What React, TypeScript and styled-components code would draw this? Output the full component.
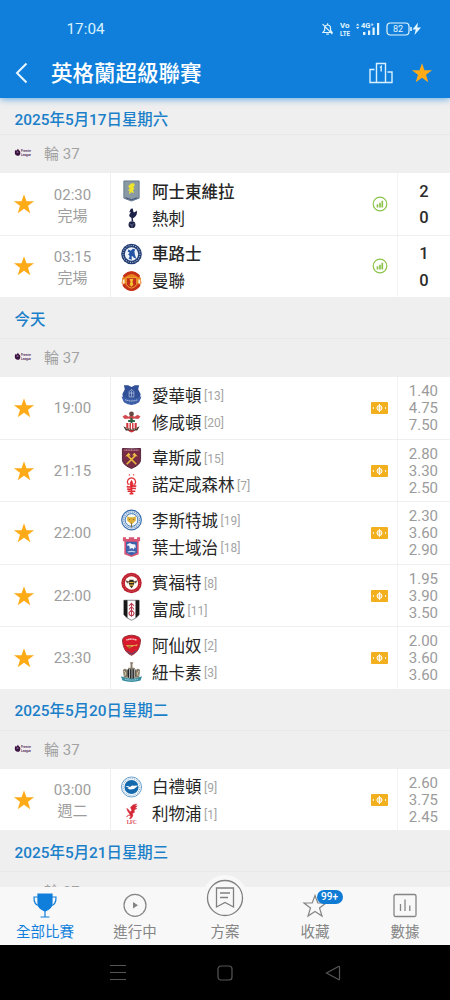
import React from "react";
import styled, { createGlobalStyle } from "styled-components";

const GlobalStyle = createGlobalStyle`
  * { box-sizing: border-box; }
  body { margin: 0; background: #efefef; }
`;

const Screen = styled.div`
  width: 450px;
  height: 1000px;
  display: flex;
  flex-direction: column;
  overflow: hidden;
  background: #efefef;
  font-family: Roboto, "Noto Sans CJK TC", sans-serif;
  svg { display: block; flex: none; overflow: visible; }
`;

const Header = styled.header`
  height: 98px;
  flex: none;
  background: #107fdb;
  color: #fff;
  box-shadow: 0 1px 7px rgba(16, 127, 219, 0.65);
  z-index: 1;
`;

const StatusBar = styled.div`
  display: flex;
  justify-content: space-between;
  align-items: center;
  height: 26px;
  margin-top: 16px;
  padding: 0 27px 0 66.5px;
  font-size: 15.3px;
  color: #d8f1ff;
`;

const TitleBar = styled.div`
  display: flex;
  align-items: center;
  height: 40px;
  margin-top: 11px;
  padding: 0 17px 0 15px;
`;

const Title = styled.h1`
  flex: 1;
  margin: 2px 0 0 23px;
  font-size: 21.5px;
  line-height: 30px;
  font-weight: 500;
`;

const Actions = styled.div`
  display: flex;
  align-items: center;
  gap: 18px;
`;

const List = styled.main`
  flex: 1;
  min-height: 0;
  overflow: hidden;
`;

const DateHeading = styled.h2<{ $pinned?: boolean }>`
  display: flex;
  align-items: center;
  height: ${(p) => (p.$pinned ? 37 : 41)}px;
  margin: 0;
  padding: 0 0 ${(p) => (p.$pinned ? "0" : "1px")} 14.5px;
  padding-top: ${(p) => (p.$pinned ? 4.5 : 0)}px;
  border-bottom: 1px solid #e8e8e8;
  font-size: 15.4px;
  font-weight: 500;
  color: #1b7fc9;
`;

const RoundRow = styled.div`
  display: flex;
  align-items: center;
  gap: 12px;
  height: 38.3px;
  padding: 0 0 3px 14px;
  font-size: 15px;
  color: #a2a2a2;
`;

const MatchRow = styled.div`
  display: grid;
  grid-template-columns: 48px 62px 1fr 36px 53px;
  height: 62.45px;
  background: #fff;
  border-bottom: 1px solid #efefef;
`;

const Centered = styled.div<{ $shift?: boolean }>`
  display: flex;
  align-items: center;
  justify-content: center;
  padding-left: ${(p) => (p.$shift ? 2 : 0)}px;
`;

const Kickoff = styled.div<{ $double?: boolean }>`
  display: flex;
  flex-direction: column;
  justify-content: center;
  align-items: center;
  padding: ${(p) => (p.$double ? 3 : 1)}px 13px 0 0;
  font-size: 15px;
  line-height: 21px;
  color: #9d9d9d;
`;

const Teams = styled.div`
  display: flex;
  flex-direction: column;
  gap: 1px;
  padding: 5px 0 0 10px;
  border-left: 1px solid #efefef;
`;

const TeamLine = styled.div<{ $winner?: boolean }>`
  display: flex;
  align-items: center;
  height: 26px;
  font-size: 16.5px;
  white-space: nowrap;
  color: #262626;
  font-weight: ${(p) => (p.$winner ? 500 : 400)};
`;

const TeamName = styled.span`
  margin-left: 10px;
  padding-top: 3px;
  line-height: 26px;
`;

const Rank = styled.span`
  margin-left: 2.5px;
  padding-top: 2px;
  font-size: 12px;
  font-weight: 400;
  color: #a4a4a4;
`;

const Score = styled.div`
  display: flex;
  flex-direction: column;
  align-items: center;
  padding-top: 5.3px;
  border-left: 1px solid #f3f3f3;
  font-size: 16.5px;
  font-weight: 500;
  line-height: 26.6px;
  color: #2c2c2c;
`;

const Odds = styled.div`
  display: flex;
  flex-direction: column;
  justify-content: center;
  align-items: flex-end;
  padding: 1px 12px 0 0;
  border-left: 1px solid #f3f3f3;
  font-size: 15px;
  line-height: 17px;
  color: #9b9b9b;
`;

const Nav = styled.nav`
  display: grid;
  grid-template-columns: repeat(5, 1fr);
  flex: none;
  height: 58px;
  background: #f8f8f8;
  z-index: 1;
`;

const NavItem = styled.div<{ $active?: boolean }>`
  position: relative;
  display: flex;
  flex-direction: column;
  align-items: center;
  gap: 4px;
  padding-top: 6px;
  color: ${(p) => (p.$active ? "#107fdb" : "#858585")};
`;

const NavLabel = styled.span`
  font-size: 14.5px;
  line-height: 22px;
  font-weight: 400;
`;

const Raised = styled.div`
  display: flex;
  align-items: center;
  justify-content: center;
  width: 46px;
  height: 46px;
  margin: -18px 0 -3px;
  border-radius: 50%;
  background: #f8f8f8;
`;

const Badge = styled.span`
  position: absolute;
  left: 46.5px;
  top: 3px;
  width: 26px;
  height: 14px;
  border-radius: 7px;
  background: #107bd5;
  color: #fff;
  font-size: 10px;
  font-weight: 500;
  line-height: 14px;
  text-align: center;
`;

const SystemBar = styled.footer`
  display: flex;
  justify-content: center;
  align-items: center;
  gap: 91.5px;
  height: 55px;
  flex: none;
  background: #000;
`;

const STAR = "M12 1.3 14.7 9H23l-6.6 5 2.4 8L12 17.3 5.2 22l2.4-8L1 9h8.3z";

const Star = ({ size = 22 }: { size?: number }) => (
  <svg width={size} height={size} viewBox="0 0 24 24"><path d={STAR} fill="#ffab17" /></svg>
);

const StatusIcons = () => (
  <svg width="103" height="16" viewBox="0 0 103 16" fill="none" stroke="#e3f6ff" strokeWidth="1.2">
    <path d="M3 11.5h9l-1.5-2.4V7c0-4-5.800-4-5.800 0v2.100zM6.300 13.200h2.600M7.600 2.300v1.400M2.600 3.200l9.800 10" />
    <g stroke="none" fill="#e3f6ff" fontFamily="Roboto, sans-serif" fontWeight="700">
      <text x="20" y="7.200" fontSize="7" textLength="9.500" lengthAdjust="spacingAndGlyphs">Vo</text>
      <text x="20" y="14.600" fontSize="7" textLength="10" lengthAdjust="spacingAndGlyphs">LTE</text>
      <text x="41" y="7" fontSize="7.500" textLength="12.500" lengthAdjust="spacingAndGlyphs">4G⁺</text>
      <text x="73" y="11" fontSize="9" fontWeight="400">82</text>
      <path d="M36 4.500 37.700 2.500 39.400 4.500zM36 6 37.700 8 39.400 6zM43 11h2.400v3H43zM48 9.500h2.200V14H48zM52.500 6.500h2.200V14h-2.200zM57 2h2.200v12H57zM98 1.500l-5.500 7h3.200L94.500 14 101 6.500h-3.700z" />
    </g>
    <rect x="67" y="2" width="22" height="12" rx="3.500" />
    <path d="M91 6v4" strokeWidth="1.600" />
  </svg>
);

const LeagueLogo = () => (
  <svg width="18" height="9" viewBox="0 0 18 9">
    <path d="M1 2.200 2.600 2.600 4 .8 4.800 2.200C7 3.200 6.500 6 5.300 7.500 3.200 8.500.8 7.300.8 4.800z" fill="#3b1140" />
    <path d="M2.600 4.300 3.800 3.700 4 5" stroke="#cbb9cd" strokeWidth=".6" fill="none" />
    <text x="7" y="4.200" fontSize="3.400" fontWeight="700" fill="#5a3160" textLength="10" lengthAdjust="spacingAndGlyphs">Premier</text>
    <text x="7" y="7.600" fontSize="3.400" fontWeight="700" fill="#5a3160" textLength="10" lengthAdjust="spacingAndGlyphs">League</text>
  </svg>
);

const StatsIcon = () => (
  <svg width="16" height="16" viewBox="0 0 16 16" fill="none" stroke="#8cc34b">
    <circle cx="8" cy="8" r="6.800" strokeWidth="1.200" />
    <path d="M5.500 8.200v3.300M8 6.800v4.700M10.300 4.700v6.800" strokeWidth="1.700" />
  </svg>
);

const PitchIcon = () => (
  <svg width="17" height="12" viewBox="0 0 17 12">
    <rect width="17" height="12" rx="1" fill="#f2b01f" />
    <circle cx="8.500" cy="6" r="2.500" fill="#f7cc6c" stroke="#fff" strokeWidth="1" />
    <path d="M8.500 2v8M2.400 5v2M14.600 5v2" stroke="#fff" strokeWidth=".9" />
  </svg>
);

const crests: Record<string, React.ReactNode> = {
  villa: (
    <>
      <path d="M3 .5h16V18.500L11 21.500 3 18.500z" fill="#8a9aa5" stroke="#66788a" />
      <path d="M10 3.500l3-.8 1.500 2-1.500 2.300 1.300 2-1.800 1 1.300 3-3-.8-2.500 2.400.7-3.600L7 10l2.300-1L7.500 6z" fill="#eee42c" />
      <path d="M5 18l6 2.200L17 18" stroke="#374b78" fill="none" />
    </>
  ),
  spurs: (
    <g fill="#1c2148">
      <circle cx="11.500" cy="18" r="3.600" />
      <path d="M10.300 1.200 12.300 1l.7 3.400c.5 1.200 1.800.8 3.400-1.200 1 3.500-.7 6.300-3 7.500l-1 .6.400 3h-1.600l-.3-3.600C8.600 10 8 8.200 9.300 6.500l1-1.800-1.700.4z" />
      <path d="M9 17.200 11.500 18.500 14 16.500M11.500 18.500v2.700" stroke="#9295ad" strokeWidth=".6" fill="none" />
    </g>
  ),
  chelsea: (
    <>
      <circle cx="11" cy="11" r="10.800" fill="#223d74" />
      <circle cx="11" cy="11" r="8.900" fill="none" stroke="#a9bad0" strokeWidth="1.100" strokeDasharray="1.100 1.300" />
      <circle cx="11" cy="11" r="7" fill="#edf3fa" />
      <path d="M8 6l2 1.700L12.500 5.500l2.500.7-1 2.300.5 3 1.500 4.500-2.500-1-1.500-2-1 1 .5 3L8 16l1.200-3-1.700-1.500L9 9.700 7 8.500z" fill="#2354a5" />
    </>
  ),
  united: (
    <>
      <circle cx="11" cy="11" r="10" fill="#d44b1f" />
      <path d="M1.500 8.500C5 1.500 17 1.500 20.500 8.500l1 5H.5z" fill="#e8801d" />
      <path d="M3 6.500Q11-2 19 6.500M2.500 15Q11 25 19.500 15" stroke="#c43116" strokeWidth="2.700" fill="none" />
      <path d="M5.500 7.500h11v7Q15 17.500 11 18.500 7 17.500 5.500 14.500z" fill="#c42d18" stroke="#f4c03a" strokeWidth=".8" />
      <path d="M9 9h4l-1 3 1 3-2 2-2-2 1-3z" fill="#f5c32f" />
      <path d="M2.800 9.500v4M19.200 9.500v4" stroke="#fff1cd" strokeWidth="2" />
    </>
  ),
  everton: (
    <>
      <path d="M3 .8h4.500L11 2.500 14.500.8H19L18 5l2.500 5c0 5-4.500 9.300-9.500 11.500C6 19.300 1.500 15 1.500 10L4 5z" fill="#304f96" />
      <path d="M8.500 13V7.500L11 5l2.500 2.500V13zM8.500 9h5M11 6.500v6" fill="none" stroke="#afbfe0" strokeWidth=".8" />
      <path d="M.5 12.500l4.500 1q6 2.500 12 0l4.500-1-2.500 6Q11 24 3 18.500z" fill="#3d5fa8" />
      <path d="M4.500 16q6.500 2.500 13 0" stroke="#c9d7ee" strokeDasharray="1.300 .6" fill="none" />
    </>
  ),
  southampton: (
    <>
      <path d="M5.500 12h11v5q-1 3.500-5.500 5Q6.500 20.500 5.500 17z" fill="#d1343c" />
      <path d="M8.300 12v6M11 12v7M13.700 12v6" stroke="#fff" strokeWidth="1.200" />
      <path d="M1.500 5.500 4.500 3.500l3.500 2 3-2 3 2 3.500-2 3 2-2.500 2.300-4.500-.5-2.500 2-2.500-2-4.500.5z" fill="#cf4b50" />
      <circle cx="11" cy="2.500" r="2.500" fill="#66493f" />
      <path d="M7.500 10h7M11 6.500v5.500" stroke="#2a6545" strokeWidth="2" />
      <path d="M2.500 15.500q8.500 5.500 17 0L17 20H5z" fill="#46352d" />
      <path d="M5 17.300q6 3 12 0" stroke="#e6d8c5" strokeDasharray="1 .8" fill="none" />
    </>
  ),
  westham: (
    <>
      <path d="M1.500 1q9.500.8 19 0v11.500c0 5-5 7.500-9.500 9.500-4.500-2-9.500-4.500-9.500-9.500z" fill="#782b45" stroke="#53243b" />
      <path d="M3.500 2.800h15" stroke="#c791a6" strokeWidth="1.200" strokeDasharray="1.200 .5" />
      <path d="M6 17.500 15.500 8M16 17.500 6.500 8" stroke="#e9b93c" strokeWidth="1.700" />
      <path d="M4.500 9.500l3.500-4 2.300 2.500zM17.500 9.500l-3.500-4L11.700 8z" fill="#edc04b" />
    </>
  ),
  forest: (
    <>
      <path d="M8.200.5h1.300M12.500.5h1.300" stroke="#e2444b" strokeWidth="1.300" />
      <path d="M9 10H7.300C5.500 7 8 3.500 11 3.500s5.500 3.500 3.700 6.500H13" fill="none" stroke="#e32d36" strokeWidth="1.300" />
      <path d="M11 5.500 12.500 8v4h-3V8z" fill="#e32d36" />
      <path d="M6 12.500q2.500 1.200 5 0t5 0M6.500 15q2.200 1.200 4.500 0t4.500 0M7 17.500h8M9 20h4M11 11v10" stroke="#e12b35" strokeWidth="1.700" fill="none" />
    </>
  ),
  leicester: (
    <>
      <circle cx="11" cy="11" r="10.300" fill="#dbe9f4" stroke="#366ab0" strokeWidth="1.200" />
      <circle cx="11" cy="11" r="8.400" fill="none" stroke="#7295b8" strokeWidth="1.200" strokeDasharray="1.200 1" />
      <circle cx="11" cy="11" r="6.700" fill="#f7f8ef" stroke="#3371bc" strokeWidth="1" />
      <path d="M6.500 7l2.500 1h4l2.500-1v4.500L13 14l-2 1.800L9 14l-2.500-2.500z" fill="#dcae35" />
      <path d="M11 14v5M8.500 10.500h1M12.500 10.500h1" stroke="#7d6a3f" />
    </>
  ),
  ipswich: (
    <>
      <path d="M2 .8h3.200v1.700h3V.8h5.600v1.700h3V.8H20V5h-1.500v13.500L11 21.500 3.500 18.500V5H2z" fill="#d95575" />
      <path d="M5.300 5.500h11.400v11.500L11 19.800 5.300 17z" fill="#3c61ad" />
      <path d="M6.500 8l3-1.200 1.500 1 4 .5.500 4-1.500-1-.5 2.500-1.300-1.500h-2l-1 1.500-.5-4.300-2 .4z" fill="#f2f6ff" />
      <path d="M7 16.300q4-1.500 8 0" stroke="#c0d4ec" strokeWidth="1.200" fill="none" />
    </>
  ),
  brentford: (
    <>
      <circle cx="11" cy="11" r="10.700" fill="#bd1e2d" />
      <circle cx="11" cy="11" r="8.800" fill="none" stroke="#dc6b70" strokeWidth=".9" strokeDasharray="1 1.300" />
      <circle cx="11" cy="11" r="7" fill="#fffaf3" />
      <path d="M4.500 8 9 9.500l-2.500 2zM17.500 8 13 9.500l2.500 2z" fill="#675749" />
      <path d="M9 7.500h4l1 3.500-1.500 3.500L11 16.500l-1.500-2L8 11z" fill="#372c23" />
      <path d="M8.800 10.500h4.400M9.300 13.200h3.400" stroke="#e7b631" strokeWidth="1.100" />
    </>
  ),
  fulham: (
    <>
      <path d="M3 .8h16v15q-1 3-8 6-7-3-8-6z" fill="#fff" stroke="#555" strokeWidth=".7" />
      <path d="M3 .8h3.800v18.700L3 16zM15.200.8H19V16l-3.800 3.500z" fill="#171717" />
      <path d="M8.300 6.800 11 4l2.700 2.800M8.300 10.500 11 7.500l2.700 3M8.300 14l2.700-3 2.700 3M11 5v13M8.300 14q0 3 2.700 3t2.700-3" stroke="#bd3d50" strokeWidth="1.100" fill="none" />
    </>
  ),
  arsenal: (
    <>
      <path d="M3 3q8-4.500 16 0l1.500 2.500C20 14 17 19.300 11 21.800 5 19.300 2 14 1.500 5.500z" fill="#d71a2b" stroke="#8f303a" />
      <path d="M5.500 5.800q5.500-2 11 0" stroke="#f6c5c9" strokeWidth="1.500" strokeDasharray="1.500 .3" fill="none" />
      <path d="M5 11h10l2-1v2h-4l-1 1H7z" fill="#dfa34d" />
      <circle cx="9" cy="13" r="1.600" fill="#a8712e" />
      <path d="M6.500 17.500l4.500 3 4.500-3" stroke="#3d5582" strokeWidth="1" fill="none" />
    </>
  ),
  newcastle: (
    <>
      <path d="M2 9q3-3 4.500.5L8 6.500h2V3L9.500.5 13 1l-1 2v3.500h2l1.500 3Q17 6 20 9l-1 8H3z" fill="#857c6b" />
      <path d="M7 8h8v7q-1 4-4 5-3-1-4-5z" fill="#202326" />
      <path d="M9 8v10M11.500 8v11M14 8v9" stroke="#d9d6cf" strokeWidth=".9" />
      <path d="M3 10l2 2-1 3M19 10l-2 2 1 3" stroke="#ddcfa8" fill="none" />
      <path d="M0 15.500q11 5 22 0l-1.500 4.500q-9.500 3-19 0z" fill="#368c9f" />
      <path d="M4 18.500q7 2 14 0" stroke="#b9dde1" strokeDasharray="1.200 .6" fill="none" />
    </>
  ),
  brighton: (
    <>
      <circle cx="11" cy="11" r="10.500" fill="#fff" stroke="#3a80b9" strokeWidth=".8" />
      <circle cx="11" cy="11" r="8.800" fill="none" stroke="#8bb5d4" strokeWidth="1.100" strokeDasharray="1.200 .9" />
      <circle cx="11" cy="11" r="7.400" fill="#1469ad" />
      <path d="M4.500 10q3-.5 5 1l2-1.500 2 .3 4.500-.3-2.500 2-2 1.500-4 .5-3-.8 2-.7z" fill="#fff" />
    </>
  ),
  liverpool: (
    <>
      <path d="M13 1.200l3.500-.8-2 2.500 2.500-.5-2.300 2.500 2 .2-3 2 .5 2-2 1 .2 3-2 3-1.500-.5 1.500-2.500-2-1-2.700 2L6.500 13l3-1.500L7 8l-1-3 2 1.500L9.500 9l1.800-2L10 4.300l1.300-1.800z" fill="#d42836" stroke="#d42836" strokeWidth=".5" />
      <text x="6" y="21" fontSize="5.500" fontFamily="Liberation Serif, serif" fontWeight="700" fill="#d84752" textLength="10.500">LFC</text>
    </>
  ),
};

const Crest = ({ id }: { id: string }) => (
  <svg width="21" height="22" viewBox="0 0 22 22">{crests[id]}</svg>
);

type Team = { id: string; name: string; rank?: number; winner?: boolean };
type Match = { time: string; note?: string; home: Team; away: Team; score?: number[]; odds?: string[] };

const t = (id: string, name: string, rank?: number, winner?: boolean): Team => ({ id, name, rank, winner });

const sections: { date: string; matches: Match[] }[] = [
  {
    date: "2025年5月17日星期六",
    matches: [
      { time: "02:30", note: "完場", home: t("villa", "阿士東維拉", undefined, true), away: t("spurs", "熱刺"), score: [2, 0] },
      { time: "03:15", note: "完場", home: t("chelsea", "車路士", undefined, true), away: t("united", "曼聯"), score: [1, 0] },
    ],
  },
  {
    date: "今天",
    matches: [
      { time: "19:00", home: t("everton", "愛華頓", 13), away: t("southampton", "修咸頓", 20), odds: ["1.40", "4.75", "7.50"] },
      { time: "21:15", home: t("westham", "韋斯咸", 15), away: t("forest", "諾定咸森林", 7), odds: ["2.80", "3.30", "2.50"] },
      { time: "22:00", home: t("leicester", "李斯特城", 19), away: t("ipswich", "葉士域治", 18), odds: ["2.30", "3.60", "2.90"] },
      { time: "22:00", home: t("brentford", "賓福特", 8), away: t("fulham", "富咸", 11), odds: ["1.95", "3.90", "3.50"] },
      { time: "23:30", home: t("arsenal", "阿仙奴", 2), away: t("newcastle", "紐卡素", 3), odds: ["2.00", "3.60", "3.60"] },
    ],
  },
  {
    date: "2025年5月20日星期二",
    matches: [
      { time: "03:00", note: "週二", home: t("brighton", "白禮頓", 9), away: t("liverpool", "利物浦", 1), odds: ["2.60", "3.75", "2.45"] },
    ],
  },
  { date: "2025年5月21日星期三", matches: [] },
];

const TeamRow = ({ team }: { team: Team }) => (
  <TeamLine $winner={team.winner}>
    <Crest id={team.id} />
    <TeamName>{team.name}</TeamName>
    {team.rank && <Rank>[{team.rank}]</Rank>}
  </TeamLine>
);

export default function App() {
  return (
    <Screen>
      <GlobalStyle />
      <Header>
        <StatusBar>
          <span>17:04</span>
          <StatusIcons />
        </StatusBar>
        <TitleBar>
          <svg width="13" height="22" viewBox="0 0 13 22" fill="none" stroke="#e8f6ff" strokeWidth="2">
            <path d="M11.500 1.500 2 11l9.500 9.500" />
          </svg>
          <Title>英格蘭超級聯賽</Title>
          <Actions>
            <svg width="24" height="22" viewBox="0 0 24 22" fill="none" stroke="#d9f1ff" strokeWidth="1.400">
              <path d="M7.500 20.500V1.500h9v19M5.500 7.500H1v13h22v-10.500h-4.500M11 5.500l1.200-1V9.500" />
            </svg>
            <Star size={22} />
          </Actions>
        </TitleBar>
      </Header>
      <List>
        {sections.map((s, i) => (
          <section key={s.date}>
            <DateHeading $pinned={i === 0}>{s.date}</DateHeading>
            <RoundRow>
              <LeagueLogo />
              <span>輪 37</span>
            </RoundRow>
            {s.matches.map((m) => (
              <MatchRow key={m.home.id}>
                <Centered><Star /></Centered>
                <Kickoff $double={!!m.note}>
                  <span>{m.time}</span>
                  {m.note && <span>{m.note}</span>}
                </Kickoff>
                <Teams>
                  <TeamRow team={m.home} />
                  <TeamRow team={m.away} />
                </Teams>
                <Centered $shift={!!m.score}>{m.score ? <StatsIcon /> : <PitchIcon />}</Centered>
                {m.score && <Score>{m.score.map((n, k) => <span key={k}>{n}</span>)}</Score>}
                {m.odds && <Odds>{m.odds.map((o, k) => <span key={k}>{o}</span>)}</Odds>}
              </MatchRow>
            ))}
          </section>
        ))}
      </List>
      <Nav>
        <NavItem $active>
          <svg width="24" height="25" viewBox="0 0 24 25" fill="none" stroke="currentColor" strokeWidth="1.200">
            <path d="M5 1h14v9c0 5-4 7-7 8-3-1-7-3-7-8z" fill="currentColor" />
            <path d="M5 4H1q-.5 8 6 9M19 4h4q.5 8-6 9M12 17v6.500M7.500 24h9" />
          </svg>
          <NavLabel>全部比賽</NavLabel>
        </NavItem>
        <NavItem>
          <svg width="24" height="25" viewBox="0 0 24 25" fill="none" stroke="currentColor" strokeWidth="1.200">
            <circle cx="12" cy="12.300" r="11" />
            <path d="M10 9v6.600l5-3.300z" fill="currentColor" stroke="none" />
          </svg>
          <NavLabel>進行中</NavLabel>
        </NavItem>
        <NavItem>
          <Raised>
            <svg width="38" height="38" viewBox="0 0 38 38" fill="none" stroke="#808080" strokeWidth="1.300">
              <circle cx="19" cy="19" r="17.500" />
              <path d="M10.500 9h17v19l-8.500-4.500-8.500 4.500zM14 14h10M14 18.500h8" />
            </svg>
          </Raised>
          <NavLabel>方案</NavLabel>
        </NavItem>
        <NavItem>
          <svg width="24" height="25" viewBox="0 0 24 25" fill="none" stroke="currentColor" strokeWidth="1.200">
            <path d="M12 2.500 14.800 10H23l-6.500 5 2.500 8-7-4.600L5 23l2.500-8L1 10h8.200z" />
          </svg>
          <Badge>99+</Badge>
          <NavLabel>收藏</NavLabel>
        </NavItem>
        <NavItem>
          <svg width="24" height="25" viewBox="0 0 24 25" fill="none" stroke="currentColor" strokeWidth="1.300">
            <rect x="1" y="1.500" width="22" height="22" rx="1.500" />
            <path d="M7.500 11v7M12 6.500V18M16.800 12.500V18" />
          </svg>
          <NavLabel>數據</NavLabel>
        </NavItem>
      </Nav>
      <SystemBar>
        <svg width="16" height="17" viewBox="0 0 16 17" stroke="#565656" strokeWidth="1.200">
          <path d="M0 1.500h16M0 8.500h16M0 15.500h16" />
        </svg>
        <svg width="16" height="16" viewBox="0 0 16 16" fill="none" stroke="#565656" strokeWidth="1.200">
          <rect x="1" y="1" width="14" height="14" rx="3" />
        </svg>
        <svg width="16" height="16" viewBox="0 0 16 16" fill="none" stroke="#565656" strokeWidth="1.200">
          <path d="M14.500 2v12q0 1-1 .5L1.500 8l12-6.500q1-.5 1 .5z" />
        </svg>
      </SystemBar>
    </Screen>
  );
}
